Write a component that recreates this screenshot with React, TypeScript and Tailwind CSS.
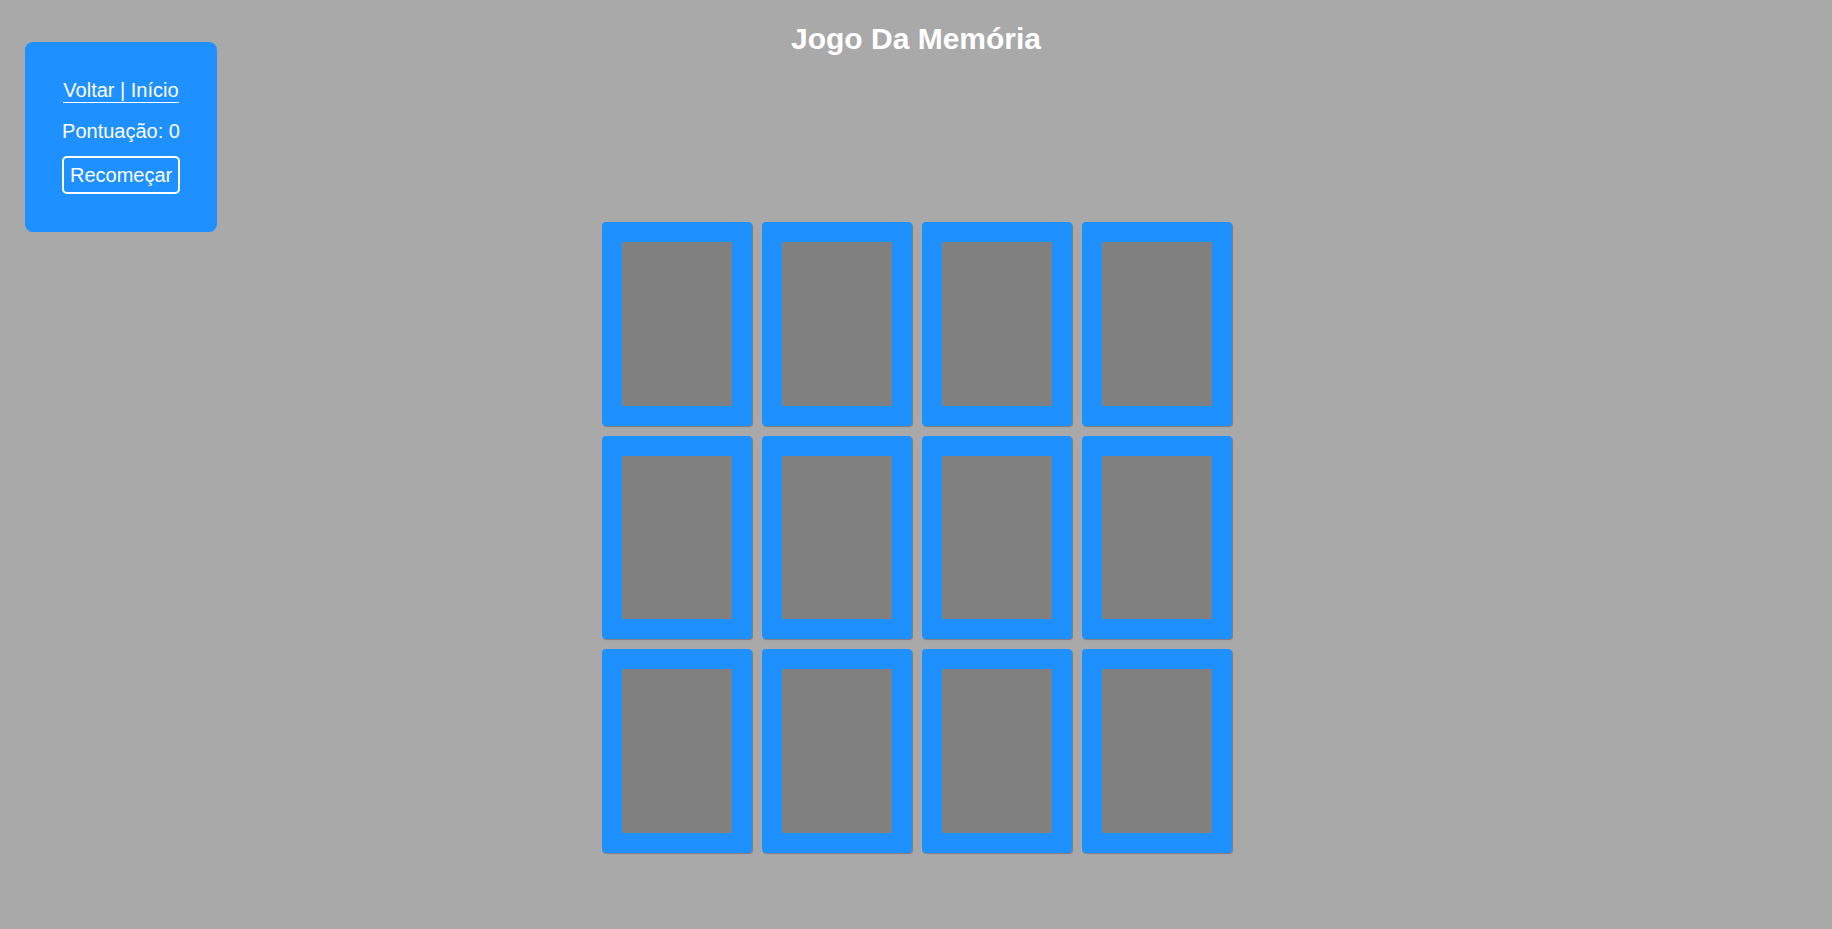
const cards = Array.from({ length: 12 }, (_, i) => i);

function Card() {
  return (
    <div className="h-[203.5px] w-[150px] rounded-[4px] bg-[#1e90ff] p-[20px] shadow-[1px_1px_1px_#7d7d7d]">
      <div className="h-full w-full bg-[#808080]" />
    </div>
  );
}

export default function App() {
  return (
    <div className="min-h-screen bg-[#a9a9a9] font-['Liberation_Sans',Arial,sans-serif] text-white">
      <div className="grid grid-cols-[1fr_auto_1fr]">
        {/* Painel lateral */}
        <div className="row-span-2 self-start">
          <div className="ml-[25px] mt-[42px] flex w-[192px] flex-col items-center rounded-[8px] bg-[#1e90ff] px-[37px] pb-[38px] pt-[37px] text-[20px] leading-[23px]">
            <a href="#" className="border-b border-white">
              Voltar | Início
            </a>
            <p className="mt-[17px]">Pontuação: 0</p>
            <button className="mt-[13px] w-[118px] rounded-[5px] border-2 border-white px-[6px] py-[5.5px] text-[20px] leading-[23px]">
              Recomeçar
            </button>
          </div>
        </div>

        <h1 className="pt-[21px] text-center text-[30px] font-bold leading-[36px]">Jogo Da Memória</h1>

        <div className="col-start-2 mt-[165px] grid grid-cols-[repeat(4,150px)] gap-[10px] pl-[6px] pr-[4px]">
          {cards.map((c) => (
            <Card key={c} />
          ))}
        </div>
      </div>
    </div>
  );
}
